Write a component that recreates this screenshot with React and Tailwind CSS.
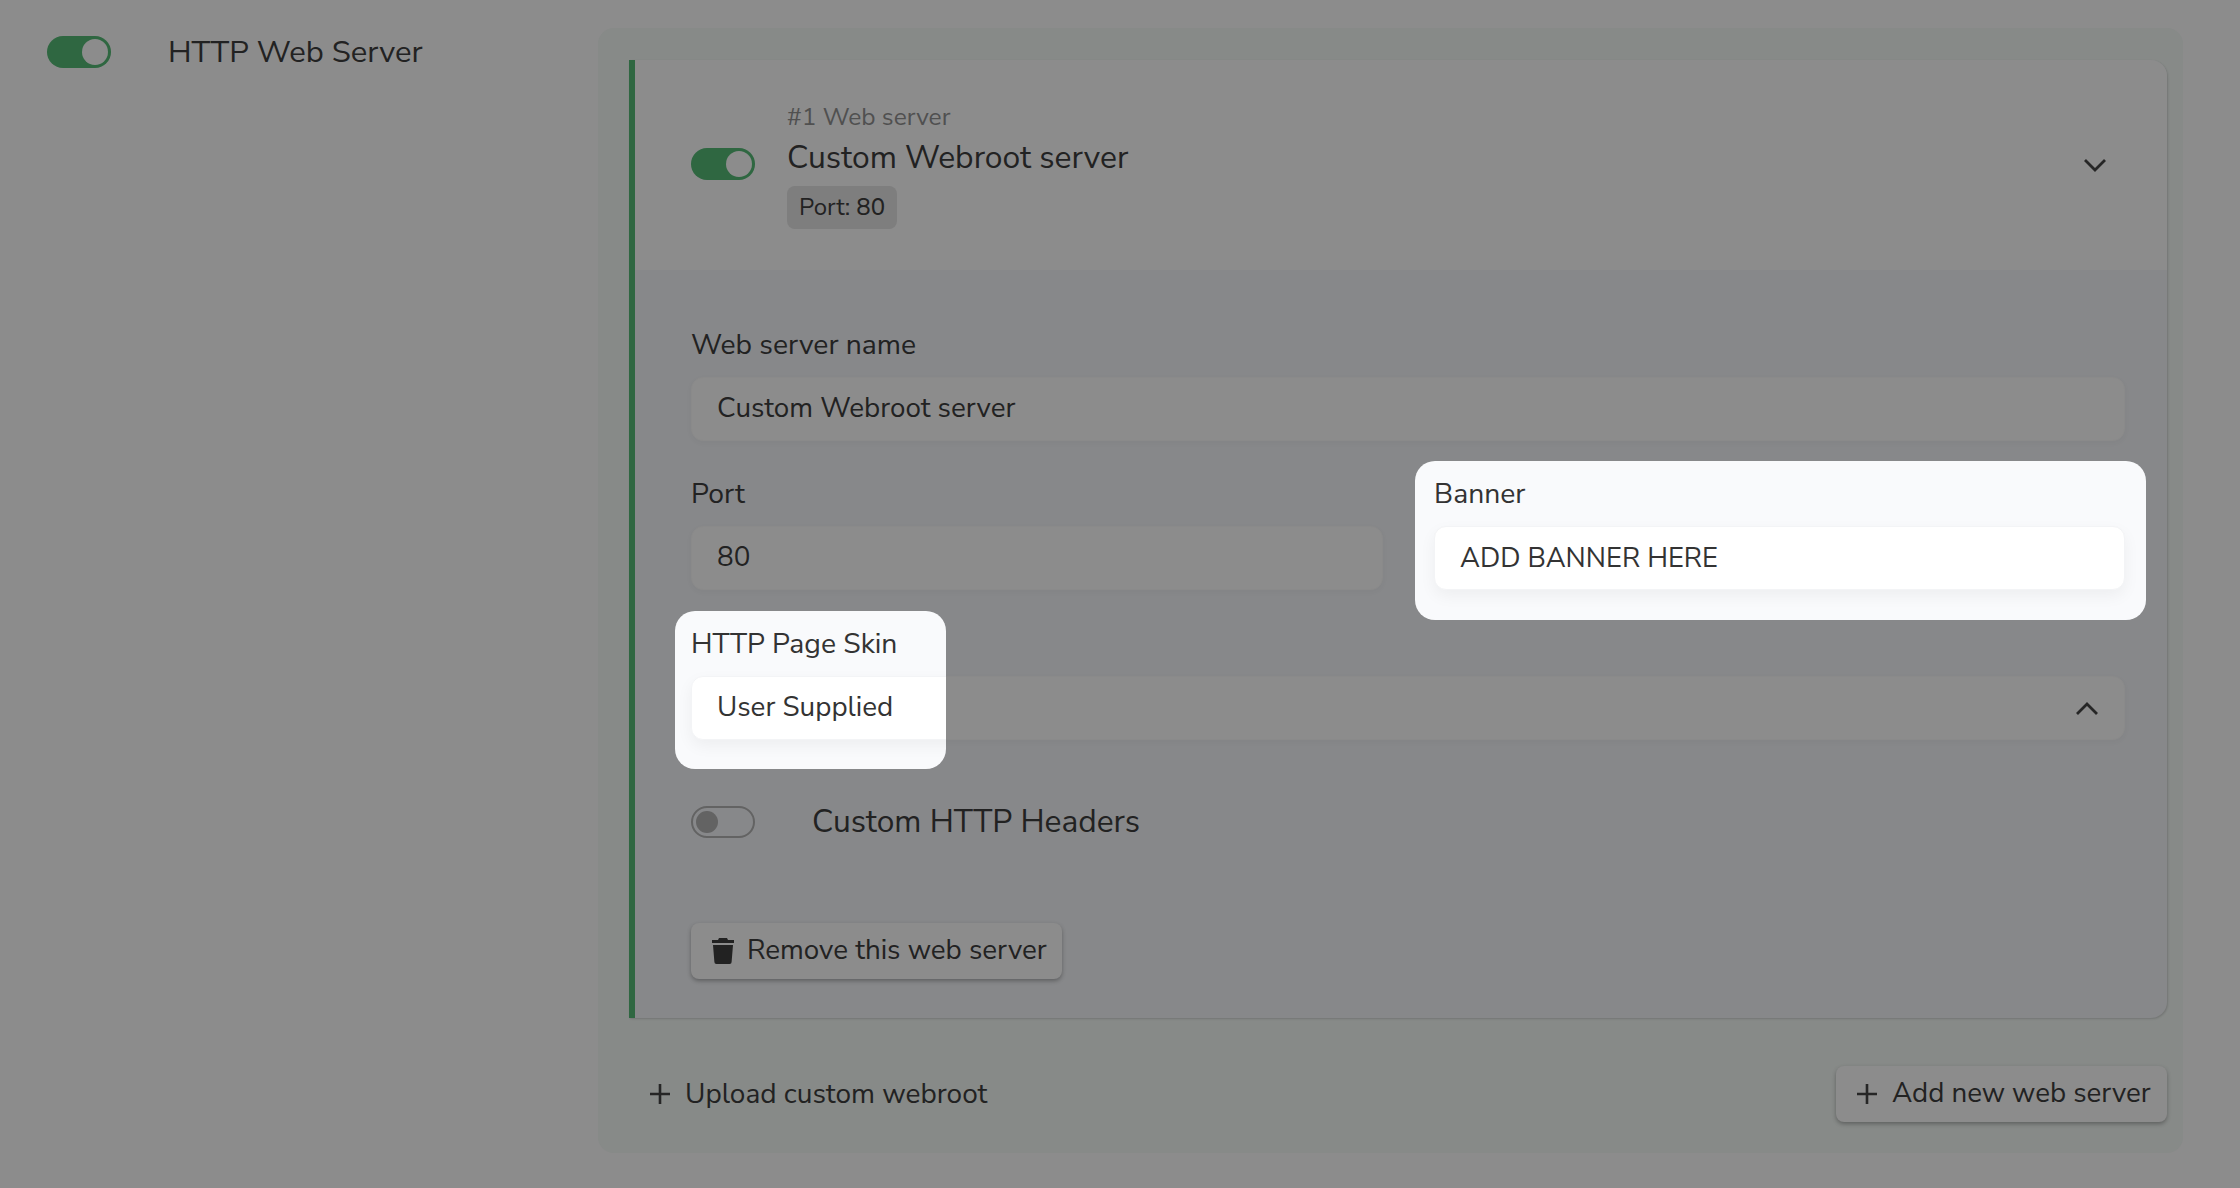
import React from "react";
const font = { fontFamily: '"Nunito Sans","Lato","Noto Sans",sans-serif' };
function Toggle({ on, className = "" }) {
  if (on) return (
    <div className={`w-16 h-8 rounded-full bg-[#2f6741] relative shrink-0 ${className}`}>
      <div className="absolute right-[3px] top-[3px] w-[26px] h-[26px] rounded-full bg-[#8c8c8c]" />
    </div>
  );
  return (
    <div className={`w-16 h-8 rounded-full border-2 border-[#636363] relative shrink-0 ${className}`}>
      <div className="absolute left-[3px] top-[3px] w-[22px] h-[22px] rounded-full bg-[#636363]" />
    </div>
  );
}
function Plus() {
  return <svg width="22" height="22" viewBox="0 0 22 22" className="shrink-0"><path d="M11 1v20M1 11h20" stroke="#262626" strokeWidth="2.6" /></svg>;
}
function Chevron({ up }) {
  return <svg width="24" height="14" viewBox="0 0 24 14" className="shrink-0"><path d={up ? "M2 13L12 3l10 10" : "M2 2l10 10L22 2"} fill="none" stroke="#262626" strokeWidth="2.8" /></svg>;
}
function Label({ children, dark }) {
  return <div className={`h-[51px] text-[28.300px] leading-[38px] whitespace-nowrap ${dark ? "text-[#333]" : "text-[#222]"}`}>{children}</div>;
}
function Input({ children, white, small, className = "" }) {
  return (
    <div className={`h-16 rounded-xl flex items-center px-[25px] whitespace-nowrap border ${small ? "text-[27.300px]" : "text-[27.800px]"} ${white ? "bg-white border-[#f3f4f6] text-[#333] shadow-[0_6px_16px_rgba(0,0,0,0.05)]" : "bg-[#8c8c8c] border-[#8a8a8a] text-[#222] shadow-[0_2px_6px_rgba(0,0,0,0.03)]"} ${className}`}>
      {children}
    </div>
  );
}
export default function App() {
  return (
    <div style={font} className="w-[2240px] h-[1188px] bg-[#8c8c8c] overflow-hidden flex text-[#222]">
      <div className="w-[598px] pl-[47px] pt-9 flex items-start shrink-0">
        <Toggle on />
        <div className="ml-[57px] text-[31px] leading-8 whitespace-nowrap">HTTP Web Server</div>
      </div>
      <div className="mt-7 w-[1585px] h-[1125px] bg-[#878a88] rounded-2xl pt-8 pl-[31px] pr-4">
        <div className="rounded-r-2xl border-l-[6px] border-[#2f6741] bg-[#87888a] h-[958px] shadow-[1px_1px_2px_rgba(0,0,0,0.15)]">
          <div className="h-[210px] bg-[#8c8c8c] rounded-tr-2xl flex items-center pl-14 pr-[60px]">
            <Toggle on className="mb-[2px]" />
            <div className="ml-[32px] flex-1 pb-[1px]">
              <div className="text-[24.500px] leading-8 text-[#505050]">#1 Web server</div>
              <div className="text-[31.800px] leading-10 mt-[5px] whitespace-nowrap">Custom Webroot server</div>
              <div className="mt-[8px] inline-block bg-[#7e7e7e] rounded-lg px-3 h-[43px] leading-[43px] text-[24px]">Port: <span className="font-medium">80</span></div>
            </div>
            <Chevron />
          </div>
          <div className="pl-14 pr-[42px] pt-[56px]">
            <Label>Web server name</Label>
            <Input>Custom Webroot server</Input>
            <div className="flex gap-[51px] mt-[34px]">
              <div className="w-[692px]">
                <Label>Port</Label>
                <Input>80</Input>
              </div>
              <div className="relative flex-1">
                <div className="absolute left-[-19px] right-[-21px] top-[-14px] h-[159px] rounded-[20px] bg-[#f9fafc]" />
                <div className="relative">
                  <Label dark>Banner</Label>
                  <Input white small>ADD BANNER HERE</Input>
                </div>
              </div>
            </div>
            <div className="relative mt-[35px]">
              <Label>HTTP Page Skin</Label>
              <Input className="justify-end"><Chevron up /></Input>
              <div className="absolute left-[-16px] top-[-14px] w-[271px] h-[158px] rounded-[20px] bg-[#f9fafc] overflow-hidden pl-4 pt-[14px]">
                <Label dark>HTTP Page Skin</Label>
                <Input white className="w-[300px]">User Supplied</Input>
              </div>
            </div>
            <div className="flex items-center mt-[66px]">
              <Toggle />
              <div className="ml-[57px] text-[31.700px] leading-8 whitespace-nowrap">Custom HTTP Headers</div>
            </div>
            <div className="mt-[85px] w-[371px] h-14 rounded-lg bg-[#8c8c8c] shadow-[0_2px_4px_rgba(0,0,0,0.3)] flex items-center pl-[21px] text-[27.800px] whitespace-nowrap">
              <svg width="22" height="26" viewBox="0 0 22 26" className="mr-[13px] shrink-0"><path d="M7 0h8l1 2h6v3H0V2h6zM1 7h20l-1.400 17a2 2 0 0 1-2 2H4.400a2 2 0 0 1-2-2z" fill="#222" /></svg>
              Remove this web server
            </div>
          </div>
        </div>
        <div className="flex items-center justify-between mt-12">
          <div className="flex items-center pl-5 text-[28px]">
            <Plus />
            <span className="ml-[14px] whitespace-nowrap">Upload custom webroot</span>
          </div>
          <div className="w-[331px] h-14 rounded-lg bg-[#8c8c8c] shadow-[0_2px_4px_rgba(0,0,0,0.3)] flex items-center pl-5 text-[27.700px]">
            <Plus />
            <span className="ml-[14px] whitespace-nowrap">Add new web server</span>
          </div>
        </div>
      </div>
    </div>
  );
}
